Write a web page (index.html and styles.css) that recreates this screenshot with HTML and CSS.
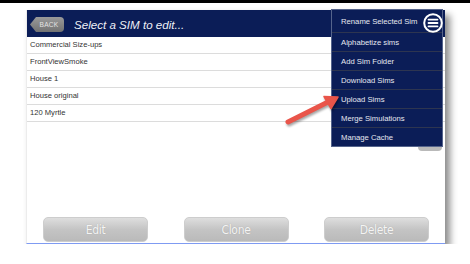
FILE: index.html
```html
<!DOCTYPE html>
<html lang="en">
<head>
    <meta charset="UTF-8">
    <meta name="viewport" content="width=device-width, initial-scale=1.0">
    <title>Select a SIM</title>
    <link rel="stylesheet" href="styles.css">
</head>
<body>
    <div class="topbar"></div>

    <div class="screen">
        <header class="titlebar">
            <span class="back-btn">BACK</span>
            <h1>Select a SIM to edit...</h1>
        </header>

        <ul class="sim-list">
            <li>Commercial Size-ups</li>
            <li>FrontViewSmoke</li>
            <li>House 1</li>
            <li>House original</li>
            <li>120 Myrtle</li>
        </ul>

        <div class="actions">
            <button class="action-btn">Edit</button>
            <button class="action-btn">Clone</button>
            <button class="action-btn">Delete</button>
        </div>

        <!-- grey button half hidden under the menu -->
        <div class="peek"></div>

        <nav class="menu">
            <a class="menu-item first">Rename Selected Sim</a>
            <a class="menu-item">Alphabetize sims</a>
            <a class="menu-item">Add Sim Folder</a>
            <a class="menu-item">Download Sims</a>
            <a class="menu-item">Upload Sims</a>
            <a class="menu-item">Merge Simulations</a>
            <a class="menu-item">Manage Cache</a>
        </nav>

        <span class="menu-toggle">
            <svg width="20" height="20" viewBox="0 0 20 20">
                <circle cx="10" cy="10" r="8.8" fill="#0b1d57" stroke="#fff" stroke-width="2"/>
                <path d="M5.5 6.6h9M5.5 10h9M5.5 13.4h9" stroke="#fff" stroke-width="1.8" stroke-linecap="round"/>
            </svg>
        </span>

        <!-- callout arrow pointing at Upload Sims -->
        <svg class="callout" width="70" height="45" viewBox="0 0 70 45">
            <line x1="11" y1="32" x2="51" y2="12" stroke="#e9554a" stroke-width="5" stroke-linecap="round"/>
            <polygon points="61,7 54,18.5 47,6.5" fill="#e9554a" stroke="#e9554a" stroke-width="1.5" stroke-linejoin="round"/>
        </svg>
    </div>
</body>
</html>
```

FILE: styles.css
```css
body {
    margin: 0;
    background: #fff;
    font-family: "Liberation Sans", Arial, sans-serif;
}
.topbar {
    height: 3px;
    background: #000;
}
.screen {
    position: relative;
    display: flex;
    flex-direction: column;
    width: 419px;
    height: 234px;
    margin: 7px 0 0 26px;
    background: #fff;
    border-left: 1px solid #ececec;
    border-bottom: 1px solid #7f9bf2;
    box-sizing: border-box;
    box-shadow: 5px 5px 7px rgba(0, 0, 0, 0.45);
}
.titlebar {
    display: flex;
    align-items: center;
    height: 27px;
    padding-left: 3px;
    padding-top: 2px;
    box-sizing: border-box;
    background: #0b1d57;
}
.back-btn {
    display: flex;
    align-items: center;
    justify-content: center;
    width: 34px;
    height: 15px;
    padding-left: 4px;
    box-sizing: border-box;
    background: linear-gradient(#9a9a9a, #727272);
    border-radius: 0 4px 4px 0;
    clip-path: polygon(6px 0, 100% 0, 100% 100%, 6px 100%, 0 50%);
    color: #e4e4e4;
    font-size: 6.6px;
    letter-spacing: 0.2px;
}
.titlebar h1 {
    margin: 0 0 0 10px;
    color: #eef0f6;
    font-size: 11.6px;
    font-weight: normal;
    font-style: italic;
}
.sim-list {
    list-style: none;
    margin: 0;
    padding: 0;
}
.sim-list li {
    height: 17px;
    line-height: 16px;
    padding-left: 3px;
    border-bottom: 1px solid #dcdcdc;
    box-sizing: border-box;
    color: #333;
    font-size: 7.6px;
}
.actions {
    display: flex;
    justify-content: space-between;
    margin-top: auto;
    padding: 0 16px 1px 16px;
}
.action-btn {
    width: 105px;
    height: 25px;
    padding: 0;
    border: 1px solid #cdcdcd;
    border-radius: 5px;
    background: linear-gradient(#dedede, #c4c4c4 50%, #bababa);
    color: #f4f4f4;
    font-family: "DejaVu Sans Condensed", "DejaVu Sans", sans-serif;
    font-stretch: condensed;
    font-size: 12px;
    letter-spacing: -0.3px;
    text-shadow: 0 0 1px #a0a0a0;
}
.peek {
    position: absolute;
    left: 391px;
    top: 128px;
    width: 24px;
    height: 13px;
    border-radius: 4px;
    background: #b9b9b9;
}
.menu {
    position: absolute;
    left: 304px;
    top: -1px;
    width: 112px;
    background: #0b1d57;
    border: 1px solid #55648c;
    box-sizing: border-box;
}
.menu-item {
    display: flex;
    align-items: center;
    height: 19px;
    padding-left: 9px;
    border-top: 1px solid #2d3550;
    box-sizing: border-box;
    color: #e6e8f0;
    font-size: 7.7px;
}
.menu-item.first {
    height: 22px;
    border-top: none;
}
.menu-toggle {
    position: absolute;
    left: 396px;
    top: 3px;
    width: 20px;
    height: 20px;
}
.callout {
    position: absolute;
    left: 250px;
    top: 80px;
    filter: drop-shadow(1px 2px 1px rgba(0, 0, 0, 0.35));
}
```
